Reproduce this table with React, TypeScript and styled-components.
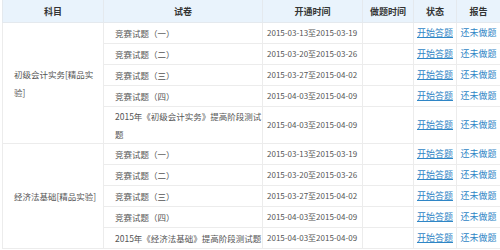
import styled, { createGlobalStyle } from 'styled-components';

interface Paper {
  title: string;
  period: string;
  tall?: boolean;
}

interface Subject {
  name: string;
  papers: Paper[];
}

const subjects: Subject[] = [
  {
    name: '初级会计实务[精品实验]',
    papers: [
      { title: '竞赛试题（一）', period: '2015-03-13至2015-03-19' },
      { title: '竞赛试题（二）', period: '2015-03-20至2015-03-26' },
      { title: '竞赛试题（三）', period: '2015-03-27至2015-04-02' },
      { title: '竞赛试题（四）', period: '2015-04-03至2015-04-09' },
      { title: '2015年《初级会计实务》提高阶段测试题', period: '2015-04-03至2015-04-09', tall: true },
    ],
  },
  {
    name: '经济法基础[精品实验]',
    papers: [
      { title: '竞赛试题（一）', period: '2015-03-13至2015-03-19' },
      { title: '竞赛试题（二）', period: '2015-03-20至2015-03-26' },
      { title: '竞赛试题（三）', period: '2015-03-27至2015-04-02' },
      { title: '竞赛试题（四）', period: '2015-04-03至2015-04-09' },
      { title: '2015年《经济法基础》提高阶段测试题', period: '2015-04-03至2015-04-09' },
    ],
  },
];

const GlobalStyle = createGlobalStyle`
  body {
    margin: 0;
    background: #ffffff;
    font-family: "Noto Sans CJK SC", "Liberation Sans", sans-serif;
  }
`;

export default function App() {
  return (
    <>
      <GlobalStyle />
      <Table>
        <colgroup>
          <col style={{ width: 101 }} />
          <col style={{ width: 159 }} />
          <col style={{ width: 100 }} />
          <col style={{ width: 51 }} />
          <col style={{ width: 43 }} />
          <col style={{ width: 44 }} />
        </colgroup>
        <thead>
          <tr>
            <HeadCell>科目</HeadCell>
            <HeadCell>试卷</HeadCell>
            <HeadCell>开通时间</HeadCell>
            <HeadCell>做题时间</HeadCell>
            <HeadCell>状态</HeadCell>
            <HeadCell>报告</HeadCell>
          </tr>
        </thead>
        <tbody>
          {subjects.map((subject) =>
            subject.papers.map((paper, i) => (
              <Row key={subject.name + i} $tall={paper.tall}>
                {i === 0 ? <SubjectCell rowSpan={subject.papers.length}>{subject.name}</SubjectCell> : null}
                <PaperCell>{paper.title}</PaperCell>
                <DateCell>{paper.period}</DateCell>
                <Cell />
                <CenterCell>
                  <StartLink href="#">开始答题</StartLink>
                </CenterCell>
                <CenterCell>
                  <ReportText>还未做题</ReportText>
                </CenterCell>
              </Row>
            ))
          )}
        </tbody>
      </Table>
    </>
  );
}

const Table = styled.table`
  margin-left: 2px;
  width: 498px;
  table-layout: fixed;
  border-collapse: collapse;

  font-size: 8.5px;
  color: #555555;
`;

const HeadCell = styled.th`
  height: 22px;
  padding: 0;

  background-color: #e9f3fc;
  border: 1px solid #e4e9ee;
  border-top: none;

  font-size: 9px;
  font-weight: bold;
  color: #333333;
  text-align: center;
`;

const Row = styled.tr<{ $tall?: boolean }>`
  height: ${({ $tall }) => ($tall ? '36px' : '21px')};
`;

const Cell = styled.td`
  padding: 0;
  border: 1px solid #ececec;
  line-height: 18px;
  vertical-align: middle;
`;

const SubjectCell = styled(Cell)`
  padding: 0 1px 0 11px;
`;

const PaperCell = styled(Cell)`
  padding: 0 0 0 11px;
`;

const DateCell = styled(Cell)`
  padding-left: 4px;
  font-size: 8px;
  white-space: nowrap;
`;

const CenterCell = styled(Cell)`
  text-align: center;
  white-space: nowrap;
  font-size: 9px;
`;

const StartLink = styled.a`
  color: #2f86c6;
  text-decoration: underline;
`;

const ReportText = styled.span`
  color: #2f86c6;
`;
